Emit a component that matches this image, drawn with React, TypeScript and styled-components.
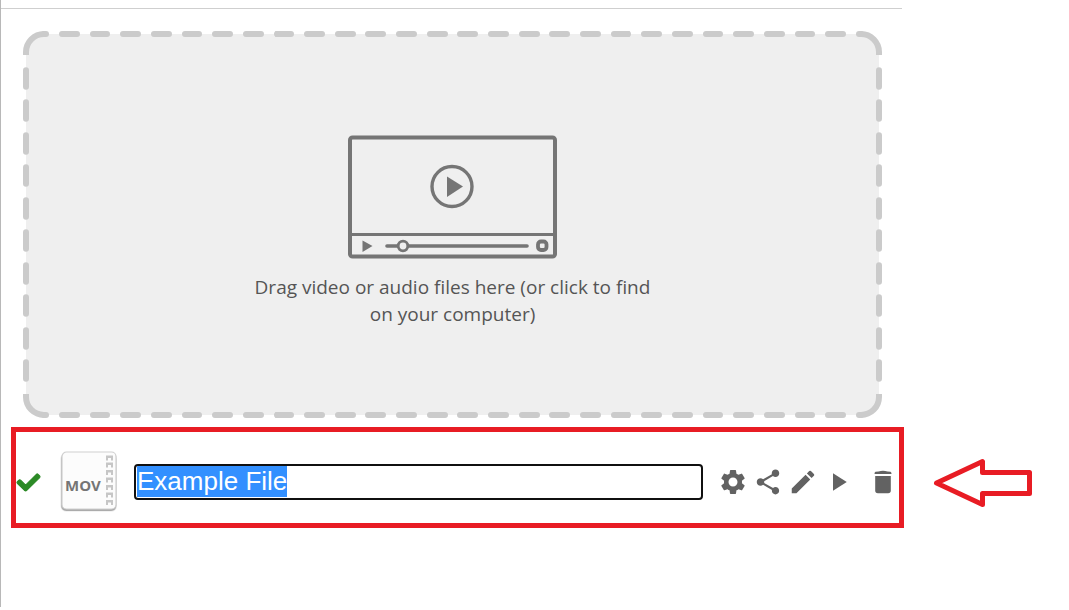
import React, { useEffect, useRef } from "react";
import styled, { createGlobalStyle } from "styled-components";
import { MdSettings, MdShare, MdEdit, MdPlayArrow } from "react-icons/md";
import { FaCheck } from "react-icons/fa";

const RED = "#e81c24";

const dashTile = encodeURIComponent(
  `<svg xmlns="http://www.w3.org/2000/svg" width="93" height="93" viewBox="0 0 93 93" fill="none" stroke="#cbcbcb" stroke-width="6">
    <g><path d="M3 24V21A18 18 0 0 1 21 3H23"/><path stroke-linecap="round" d="M21 3H23"/></g>
    <g transform="translate(93 0) scale(-1 1)"><path d="M3 24V21A18 18 0 0 1 21 3H23"/><path stroke-linecap="round" d="M21 3H23"/></g>
    <g transform="translate(0 93) scale(1 -1)"><path d="M3 24V21A18 18 0 0 1 21 3H23"/><path stroke-linecap="round" d="M21 3H23"/></g>
    <g transform="translate(93 93) scale(-1 -1)"><path d="M3 24V21A18 18 0 0 1 21 3H23"/><path stroke-linecap="round" d="M21 3H23"/></g>
    <path stroke-linecap="round" d="M39 3H54M39 90H54M3 39V54M90 39V54"/>
  </svg>`
);

const GlobalStyle = createGlobalStyle`
  *, *::before, *::after { box-sizing: border-box; }
  body {
    margin: 0;
    background: #fff;
    font-family: "Liberation Sans", Arial, sans-serif;
  }
`;

const Page = styled.main`
  min-height: calc(100vh - 3px);
  border-left: 1px solid #b8b8b8;
`;

const TopRule = styled.div`
  height: 9px;
  margin-right: 167px;
  border-bottom: 1px solid #cfcfcf;
`;

const DropZone = styled.label`
  display: flex;
  flex-direction: column;
  align-items: center;
  margin: 25px 190px 0 25px;
  padding: 100px 20px 86px;
  border: 1px solid transparent;
  border-radius: 18px;
  background: #efefef border-box;
  border-image: url("data:image/svg+xml,${dashTile}") 31 / 31px / 3px round;
  cursor: pointer;
`;

const FileInput = styled.input`
  position: absolute;
  width: 1px;
  height: 1px;
  opacity: 0;
`;

const DropText = styled.span`
  max-width: 420px;
  margin-top: 15px;
  color: #555;
  font: 19px/27px "Open Sans", "Noto Sans", sans-serif;
  text-align: center;
`;

const FileRow = styled.div`
  display: flex;
  align-items: center;
  gap: 29px;
  margin: 12px 37px 0 10px;
`;

const FileBox = styled.section`
  display: flex;
  flex: 1;
  align-items: center;
  min-width: 0;
  padding: 19px 1px 10px;
  border: 5px solid ${RED};
`;

const DoneMark = styled(FaCheck)`
  flex: none;
  width: 23px;
  height: 23px;
  overflow: visible;
  color: #2c8a26;
  stroke: #2c8a26;
  stroke-width: 24px;
`;

const FileThumb = styled.svg`
  flex: none;
  width: 62px;
  height: 62px;
  margin-left: 18px;
`;

const NameInput = styled.input`
  flex: 1;
  min-width: 0;
  height: 36px;
  margin-left: 14px;
  padding: 0 1px 2px;
  border: 2px solid #101010;
  border-radius: 4px;
  outline: none;
  background: #fff;
  color: #000;
  font: 26px/30px "Liberation Sans", Arial, sans-serif;

  &::selection {
    background: #3390ff;
    color: #fff;
  }
`;

const Actions = styled.div`
  display: flex;
  gap: 5px;
  margin-left: 15px;
`;

const ActionButton = styled.button<{ $apart?: boolean }>`
  display: flex;
  margin: 0 0 0 ${(p) => (p.$apart ? "10px" : "0")};
  padding: 0;
  border: 0;
  background: none;
  color: #626262;
  font-size: 30px;
  cursor: pointer;
`;

const PointerArrow = styled.svg`
  flex: none;
  width: 99px;
  height: 50px;
  margin-top: 11px;
`;

function PlayerArt() {
  return (
    <svg width="210" height="124" viewBox="0 0 210 124" fill="none" stroke="#757575" aria-hidden="true">
      <rect x="2" y="2.5" width="205" height="119" rx="2.5" strokeWidth="4" />
      <path d="M3 99.5H207" strokeWidth="3" />
      <circle cx="104" cy="51.5" r="20" strokeWidth="3.4" />
      <path d="M99 41.5V62L115 51.5Z" fill="#757575" stroke="none" />
      <path d="M14.5 105.5V117L24.5 111Z" fill="#757575" stroke="none" />
      <path d="M39 111H179" strokeWidth="3.6" strokeLinecap="round" />
      <circle cx="55" cy="111" r="4.8" fill="#efefef" strokeWidth="2.8" />
      <rect x="190" y="106.5" width="8.500" height="8.500" rx="3" strokeWidth="3.8" />
    </svg>
  );
}

function TrashIcon() {
  return (
    <svg width="30" height="30" viewBox="0 0 30 30" fill="currentColor" aria-hidden="true">
      <path d="M10.500 4.500Q15 2.800 19.500 4.500L22.500 4.800Q23.500 5 23.500 7H6.500Q6.500 5 7.500 4.800Z" />
      <path d="M7.200 9H22.800V23.500Q22.800 26.200 20.200 26.200H9.800Q7.200 26.200 7.200 23.500Z" />
    </svg>
  );
}

export default function App() {
  const nameRef = useRef<HTMLInputElement>(null);

  useEffect(() => {
    nameRef.current?.focus();
    nameRef.current?.select();
  }, []);

  return (
    <>
      <GlobalStyle />
      <Page>
        <TopRule />
        <DropZone>
          <FileInput type="file" accept="video/*,audio/*" multiple />
          <PlayerArt />
          <DropText>Drag video or audio files here (or click to find on your computer)</DropText>
        </DropZone>
        <FileRow>
          <FileBox>
            <DoneMark aria-hidden="true" />
            <FileThumb viewBox="0 0 62 62" aria-hidden="true">
              <rect x="2.500" y="2" width="56.500" height="58.500" rx="5.500" fill="#000" opacity="0.1" />
              <rect x="3.200" y="3" width="55" height="57" rx="5" fill="#000" opacity="0.25" />
              <rect x="4" y="1" width="54" height="57" rx="4.500" fill="#fcfcfc" stroke="#cfcfcf" strokeWidth="1.200" />
              <g fill="#c6c6c6">
                {[4.5, 11.5, 19, 26.5, 34, 41.5, 49].map((y) => (
                  <path key={y} d={`M48 ${y}h7v5h-2v-2.500h-3v2.500h-2z`} />
                ))}
              </g>
              <text x="7" y="40" fill="#757575" fontFamily="Open Sans, Noto Sans, sans-serif" fontWeight="700" fontSize="15">
                MOV
              </text>
            </FileThumb>
            <NameInput ref={nameRef} aria-label="File name" defaultValue="Example File" />
            <Actions>
              <ActionButton type="button" aria-label="Settings"><MdSettings /></ActionButton>
              <ActionButton type="button" aria-label="Share"><MdShare /></ActionButton>
              <ActionButton type="button" aria-label="Edit"><MdEdit /></ActionButton>
              <ActionButton type="button" aria-label="Play"><MdPlayArrow /></ActionButton>
              <ActionButton type="button" aria-label="Delete" $apart><TrashIcon /></ActionButton>
            </Actions>
          </FileBox>
          <PointerArrow viewBox="0 0 99 50" aria-hidden="true">
            <path
              d="M3.500 25L49.500 3.500V14.500H96.500V35.500H49.500V46.500Z"
              fill="none"
              stroke={RED}
              strokeWidth="5"
              strokeLinejoin="round"
            />
          </PointerArrow>
        </FileRow>
      </Page>
    </>
  );
}
